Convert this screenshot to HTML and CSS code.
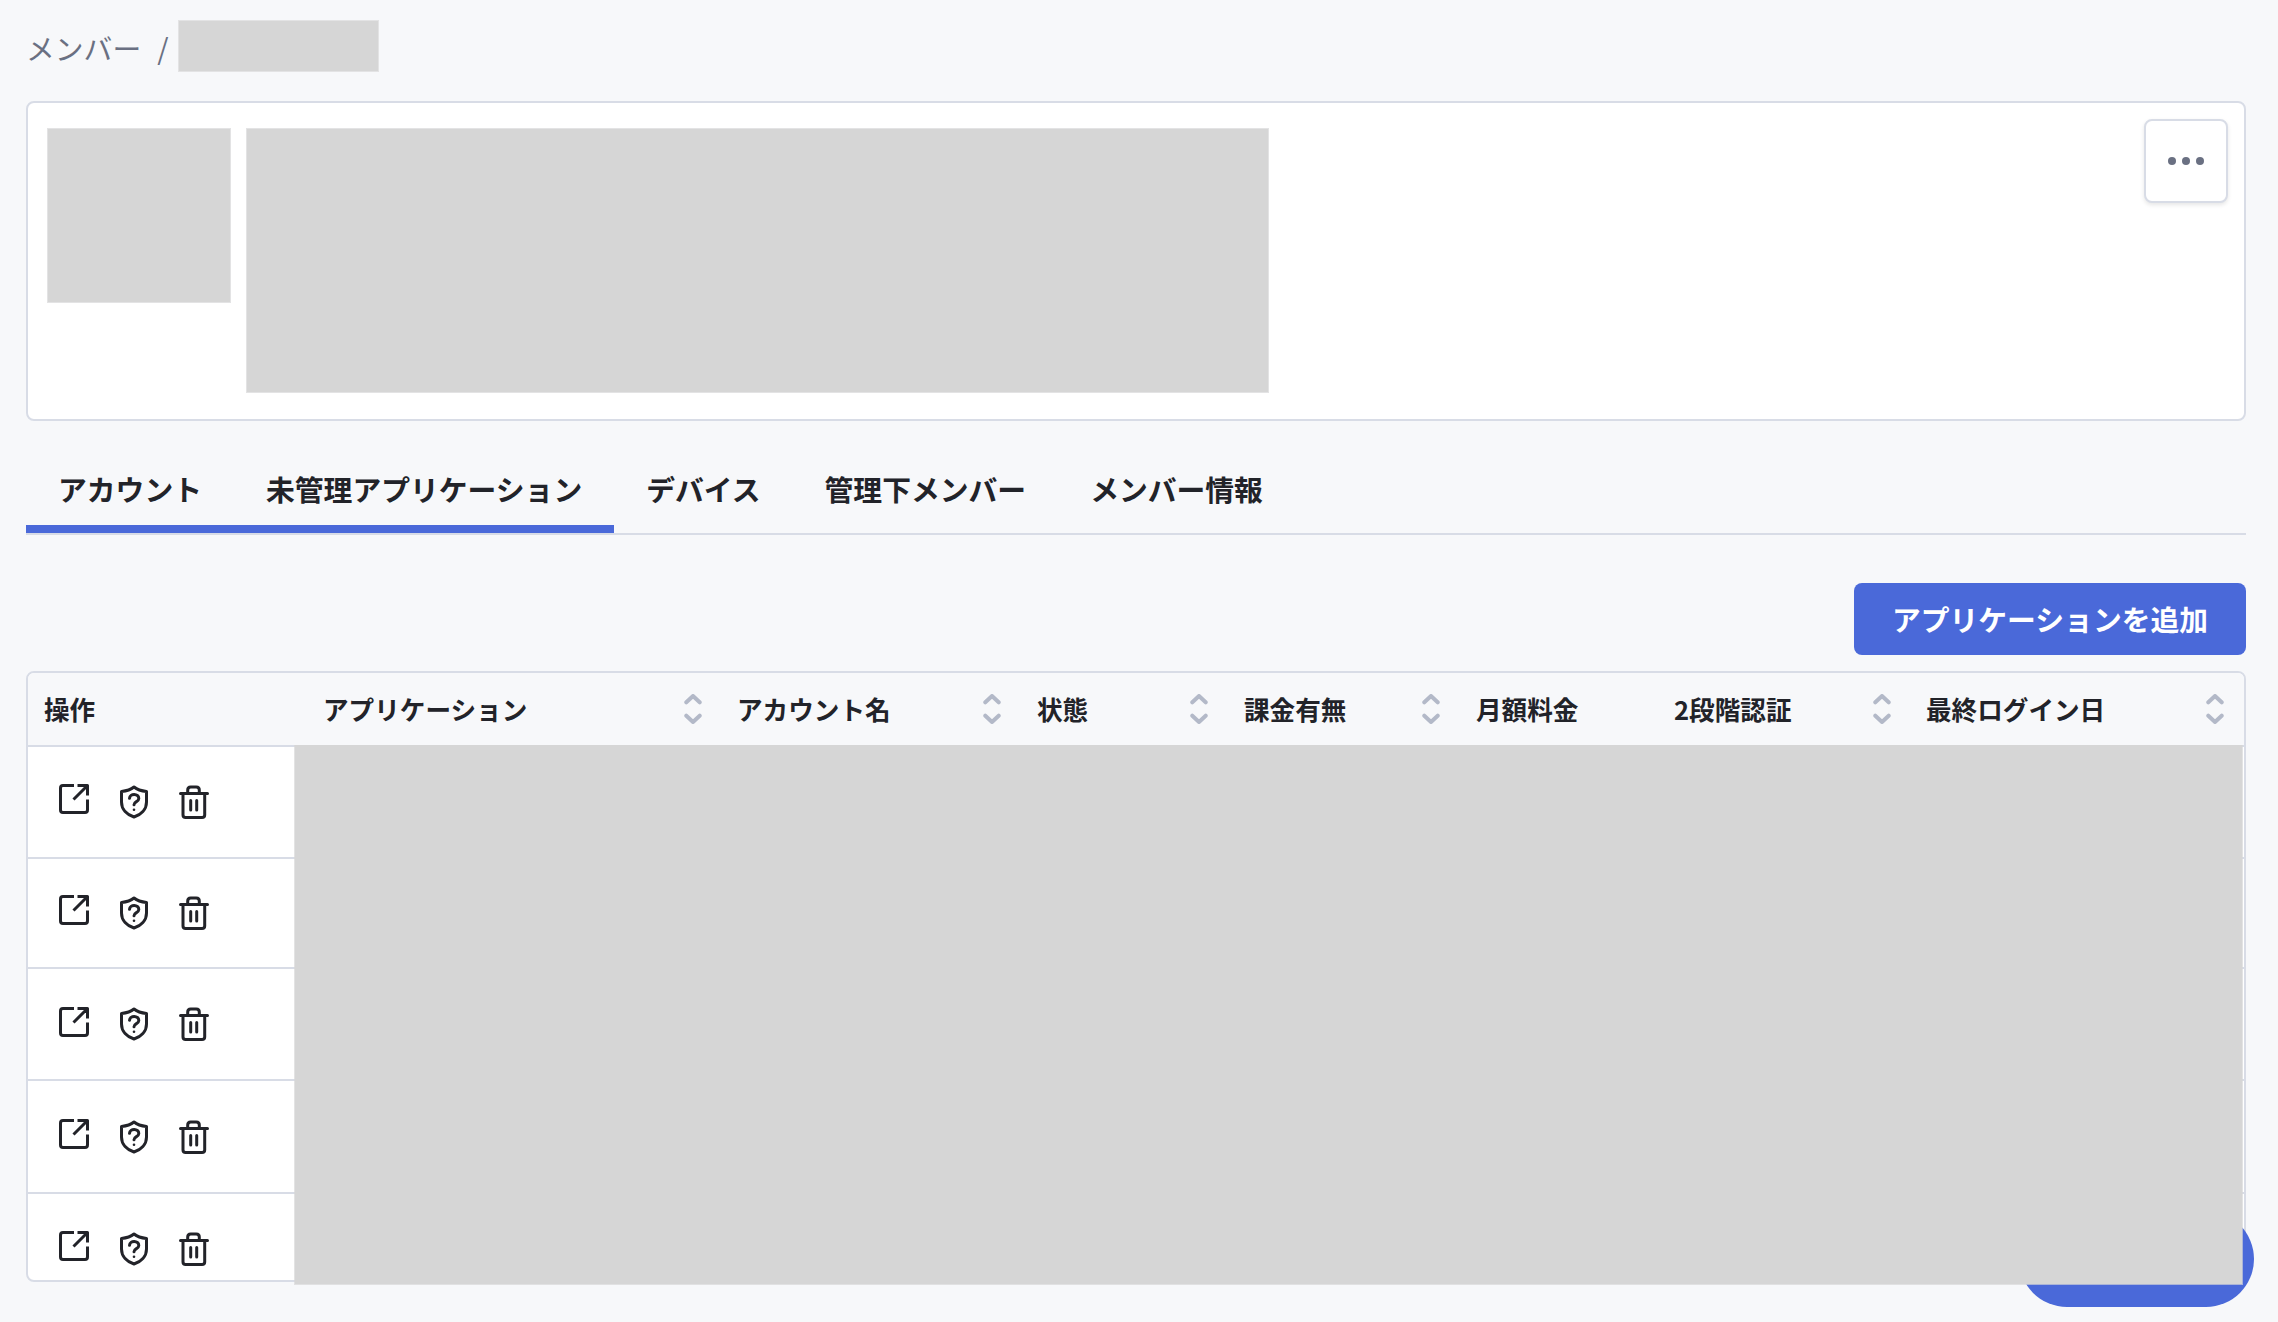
FILE: index.html
```html
<!DOCTYPE html>
<html lang="ja">
<head>
<meta charset="utf-8">
<title>メンバー</title>
<link rel="stylesheet" href="styles.css">
</head>
<body>
<svg class="sprite" aria-hidden="true">
  <symbol id="external" viewBox="0 0 30 30"><path d="M15 1.5H4Q1.5 1.5 1.5 4V26Q1.5 28.5 4 28.5H26Q28.5 28.5 28.5 26V15.5M14.500 15.500L28 2M18.5 1.5H28.5V11.5"/></symbol>
  <symbol id="shield" viewBox="0 0 28 34"><path d="M14 2Q18.500 5.700 26.500 6.500V17C26.500 24.500 21 29.700 14 32C7 29.700 1.500 24.500 1.500 17V6.500Q9.500 5.700 14 2Z"/><path d="M9.500 13.300C9.800 8 18.800 8.200 18.800 13.500C18.800 17 14 16.200 14 19.800"/><circle class="dot" cx="14" cy="24.700" r="1.300"/></symbol>
  <symbol id="trash" viewBox="0 0 30 34"><path d="M1.500 8.500H28.500M8.700 8.500V5Q8.700 2 11.700 2H17.300Q20.300 2 20.300 5V8.500M4 8.500V30Q4 32.500 6.700 32.500H23Q25.700 32.500 25.700 30V8.500M11.700 15.500V25M17.700 15.500V25"/></symbol>
  <symbol id="sort" viewBox="0 0 18 30"><path d="M2.300 8.300L9 2L15.700 8.300M2.300 21.700L9 28L15.700 21.700"/></symbol>
</svg>
<main class="page">
  <nav class="breadcrumb"><span class="crumb">メンバー</span><span class="crumb slash">/</span><span class="redacted crumb-name"></span></nav>
  <section class="profile">
    <div class="redacted avatar"></div>
    <div class="redacted details"></div>
    <button class="more" aria-label="メニュー"><i></i><i></i><i></i></button>
  </section>
  <nav class="tabs">
    <a class="tab active">アカウント</a><a class="tab active">未管理アプリケーション</a><a class="tab">デバイス</a><a class="tab">管理下メンバー</a><a class="tab">メンバー情報</a>
  </nav>
  <div class="toolbar"><button class="add">アプリケーションを追加</button></div>
  <section class="table">
    <div class="head">
      <div class="cell">操作</div>
      <div class="cell wide">アプリケーション<svg class="sort"><use href="#sort"/></svg></div>
      <div class="cell wide">アカウント名<svg class="sort"><use href="#sort"/></svg></div>
      <div class="cell">状態<svg class="sort"><use href="#sort"/></svg></div>
      <div class="cell">課金有無<svg class="sort"><use href="#sort"/></svg></div>
      <div class="cell">月額料金</div>
      <div class="cell">2段階認証<svg class="sort"><use href="#sort"/></svg></div>
      <div class="cell wide">最終ログイン日<svg class="sort"><use href="#sort"/></svg></div>
    </div>
    <div class="row"><svg class="external"><use href="#external"/></svg><svg class="shield"><use href="#shield"/></svg><svg class="trash"><use href="#trash"/></svg></div>
    <div class="row short"><svg class="external"><use href="#external"/></svg><svg class="shield"><use href="#shield"/></svg><svg class="trash"><use href="#trash"/></svg></div>
    <div class="row low"><svg class="external"><use href="#external"/></svg><svg class="shield"><use href="#shield"/></svg><svg class="trash"><use href="#trash"/></svg></div>
    <div class="row tall"><svg class="external"><use href="#external"/></svg><svg class="shield"><use href="#shield"/></svg><svg class="trash"><use href="#trash"/></svg></div>
    <div class="row"><svg class="external"><use href="#external"/></svg><svg class="shield"><use href="#shield"/></svg><svg class="trash"><use href="#trash"/></svg></div>
  </section>
</main>
<div class="fab"></div>
<div class="redacted table-mask"></div>
</body>
</html>
```
FILE: styles.css
```css
* { box-sizing: border-box; }
body {
  margin: 0;
  height: 1322px;
  overflow: hidden;
  position: relative;
  background: #f7f8fa;
  color: #222329;
  font-family: "Noto Sans CJK JP", sans-serif;
  font-size: 28.8px;
}
button { font: inherit; padding: 0; }
svg { fill: none; stroke: #222329; stroke-width: 3; stroke-linecap: round; stroke-linejoin: round; flex: none; }
.sprite { position: absolute; width: 0; height: 0; }
.dot { fill: #222329; stroke: none; }
.redacted { background: #d6d6d6; border: 1px solid #e3e3e4; }
.page { padding: 20px 32px 0 26px; }

.breadcrumb { display: flex; align-items: center; height: 52px; color: #6a7082; }
.crumb { padding-top: 2px; }
.slash { width: 37px; padding-left: 16px; }
.crumb-name { width: 201px; height: 52px; }

.profile {
  display: flex;
  align-items: flex-start;
  gap: 15px;
  height: 320px;
  margin-top: 29px;
  padding: 25px 16px 0 19px;
  background: #fff;
  border: 2px solid #d8dce6;
  border-radius: 8px;
}
.avatar { width: 184px; height: 175px; }
.details { width: 1023px; height: 265px; }
.more {
  display: flex;
  align-items: center;
  justify-content: center;
  gap: 6px;
  width: 84px;
  height: 84px;
  margin: -9px 0 0 auto;
  background: #fff;
  border: 2px solid #d8dce6;
  border-radius: 8px;
  box-shadow: 0 2px 4px rgba(0, 0, 0, .1);
}
.more i { width: 8px; height: 8px; border-radius: 50%; background: #6a7082; }

.tabs { display: flex; height: 88px; margin-top: 26px; border-bottom: 2px solid #d8dce6; font-weight: 700; }
.tab { display: flex; align-items: center; padding: 4px 32px 0; height: 86px; border-bottom: 8px solid transparent; }
.tab.active { border-color: #4a69d9; }

.toolbar { display: flex; justify-content: flex-end; margin-top: 48px; }
.add { width: 392px; height: 72px; padding-bottom: 2px; border: 0; border-radius: 8px; background: #4a69d9; color: #fff; font-weight: 700; }

.table { height: 611px; margin-top: 16px; overflow: hidden; background: #fff; border: 2px solid #d8dce6; border-radius: 8px; }
.head {
  display: grid;
  grid-template-columns: 276px 414px 299px 207px 232px 198px 253px 1fr;
  height: 74px;
  background: #f7f8fa;
  border-bottom: 2px solid #d8dce6;
  font-size: 25.6px;
  font-weight: 700;
}
.cell { display: flex; align-items: center; justify-content: space-between; padding: 0 16px 2px 20px; white-space: nowrap; }
.cell:first-child { padding-left: 16px; }
.cell.wide { padding-left: 19px; }
.cell:last-child { padding-right: 20px; }
.sort { width: 18px; height: 30px; margin-top: 2px; stroke: #b3b9c8; stroke-width: 4; }
.row { display: flex; align-items: flex-start; height: 112px; padding: 37px 0 0 31px; border-bottom: 2px solid #d8dce6; }
.row.short { height: 110px; padding-top: 36px; }
.row.low { padding-top: 38px; }
.row.tall { height: 113px; padding-top: 38px; }
.external { width: 30px; height: 30px; stroke-linecap: butt; }
.shield { width: 28px; height: 34px; margin: 1px 0 0 31px; }
.trash { width: 30px; height: 34px; margin: 1px 0 0 31px; }
.low .shield, .low .trash { margin-top: 0; }

.fab { position: absolute; left: 2019px; top: 1211px; width: 235px; height: 96px; border-radius: 48px; background: #4a69d9; }
.table-mask { position: absolute; left: 294px; top: 745px; width: 1949px; height: 540px; border-top: 0; border-color: #d6d6d6b0; background-clip: padding-box; }
```
